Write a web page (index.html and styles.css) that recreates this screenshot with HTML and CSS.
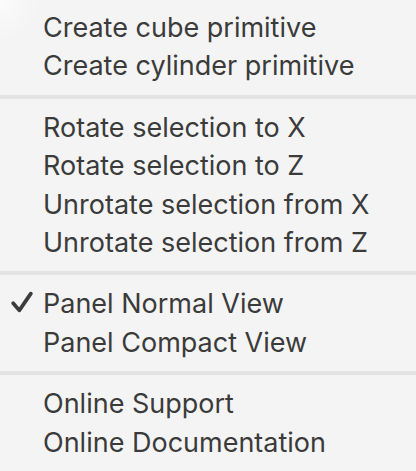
FILE: index.html
```html
<!DOCTYPE html>
<html>
<head>
<meta charset="utf-8">
<link rel="stylesheet" href="styles.css">
</head>
<body>
<div class="menu">
  <div class="section">
    <div class="item">Create cube primitive</div>
    <div class="item">Create cylinder primitive</div>
  </div>
  <div class="sep"></div>
  <div class="section">
    <div class="item">Rotate selection to X</div>
    <div class="item">Rotate selection to Z</div>
    <div class="item">Unrotate selection from X</div>
    <div class="item">Unrotate selection from Z</div>
  </div>
  <div class="sep"></div>
  <div class="section">
    <div class="item checked"><svg class="check" viewBox="0 0 22 22" width="22" height="22"><path d="M2.2 12.2 L8.3 19.4 L19.8 2.6" fill="none" stroke="#3c3c3c" stroke-width="3.7" stroke-linecap="round" stroke-linejoin="round"/></svg>Panel Normal View</div>
    <div class="item">Panel Compact View</div>
  </div>
  <div class="sep"></div>
  <div class="section">
    <div class="item">Online Support</div>
    <div class="item">Online Documentation</div>
  </div>
</div>
</body>
</html>
```
FILE: styles.css
```css
html, body {
  margin: 0;
  padding: 0;
  background: #f4f4f4;
}
.menu {
  width: 416px;
  height: 471px;
  overflow: hidden;
  background: radial-gradient(circle at 0 0, #fbfbfb 0, #f4f4f4 40px),
              #f4f4f4;
  font-family: Inter, "Noto Sans", sans-serif;
  color: #3b3b3b;
  font-size: 27px;
  padding-top: 9px;
  box-sizing: border-box;
}
.section {
  display: flex;
  flex-direction: column;
}
.item {
  position: relative;
  height: 38.4px;
  line-height: 38.4px;
  padding-left: 43px;
  white-space: nowrap;
}
.check {
  position: absolute;
  left: 11px;
  top: 6px;
}
.sep {
  height: 4px;
  background: #e3e3e3;
  margin: 9px 0 10px;
}
```
